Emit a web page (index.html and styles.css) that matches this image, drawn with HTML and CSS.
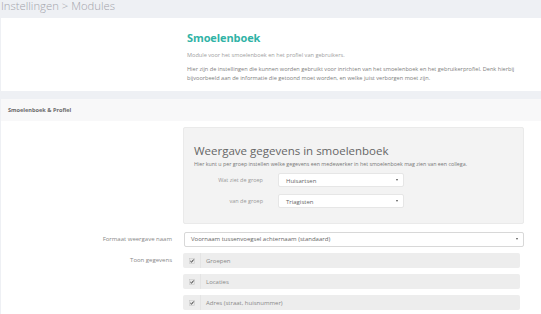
FILE: index.html
```html
<!DOCTYPE html>
<html lang="nl">
<head>
  <meta charset="UTF-8" />
  <title>Instellingen &gt; Modules</title>
  <link rel="stylesheet" href="styles.css">
</head>
<body>

<h1 class="page-title">Instellingen &gt; Modules</h1>

<section class="panel intro">
  <h2>Smoelenboek</h2>
  <p class="lead">Module voor het smoelenboek en het profiel van gebruikers.</p>
  <p>Hier zijn de instellingen die kunnen worden gebruikt voor inrichten van het smoelenboek en het gebruikerprofiel. Denk hierbij bijvoorbeeld aan de informatie die getoond moet worden, en welke juist verborgen moet zijn.</p>
</section>

<section class="panel settings">
  <div class="panel-header">Smoelenboek &amp; Profiel</div>

  <div class="form">
    <div></div>
    <div class="group-box">
      <h3>Weergave gegevens in smoelenboek</h3>
      <p>Hier kunt u per groep instellen welke gegevens een medewerker in het smoelenboek mag zien van een collega.</p>
      <div class="box-row">
        <label>Wat ziet de groep</label>
        <div class="select small">Huisartsen <span class="caret"></span></div>
      </div>
      <div class="box-row">
        <label>van de groep</label>
        <div class="select small">Triagisten <span class="caret"></span></div>
      </div>
    </div>

    <label class="form-label">Formaat weergave naam</label>
    <div class="select wide">Voornaam tussenvoegsel achternaam (standaard) <span class="caret"></span></div>

    <label class="form-label top">Toon gegevens</label>
    <div class="checks">
      <div class="check-row">
        <span class="check-cell"><svg width="6" height="6" viewBox="0 0 6 6"><rect x="0.5" y="0.5" width="5" height="5" fill="#e8e8e8" stroke="#c4c4c4" stroke-width="0.5"/><path d="M1.4 3.1 L2.5 4.2 L4.7 1.5" fill="none" stroke="#333" stroke-width="1"/></svg></span>
        <span class="check-text">Groepen</span>
      </div>
      <div class="check-row">
        <span class="check-cell"><svg width="6" height="6" viewBox="0 0 6 6"><rect x="0.5" y="0.5" width="5" height="5" fill="#e8e8e8" stroke="#c4c4c4" stroke-width="0.5"/><path d="M1.4 3.1 L2.5 4.2 L4.7 1.5" fill="none" stroke="#333" stroke-width="1"/></svg></span>
        <span class="check-text">Locaties</span>
      </div>
      <div class="check-row">
        <span class="check-cell"><svg width="6" height="6" viewBox="0 0 6 6"><rect x="0.5" y="0.5" width="5" height="5" fill="#e8e8e8" stroke="#c4c4c4" stroke-width="0.5"/><path d="M1.4 3.1 L2.5 4.2 L4.7 1.5" fill="none" stroke="#333" stroke-width="1"/></svg></span>
        <span class="check-text">Adres (straat, huisnummer)</span>
      </div>
    </div>
  </div>
</section>

</body>
</html>
```

FILE: styles.css
```css
body {
  margin: 0;
  font-family: 'Open Sans', sans-serif;
  background: #eef0f4;
  overflow: hidden;
}

.page-title {
  margin: 0;
  height: 18px;
  padding-left: 1px;
  font-size: 11.3px;
  font-weight: 300;
  line-height: 12px;
  color: #a3a4ab;
}

.panel {
  background: #fff;
  margin-left: 1px;
}

.intro {
  padding: 13px 16px 8px 186px;
}

.intro h2 {
  margin: 0;
  font-size: 11px;
  line-height: 14px;
  font-weight: 700;
  color: #2fb3a6;
  letter-spacing: -0.1px;
}

.intro p {
  margin: 5px 0 0;
  font-size: 5.6px;
  line-height: 9px;
  color: #808080;
}

.intro .lead {
  margin-top: 6px;
  color: #a0a0a0;
}

.settings {
  margin-top: 8px;
  height: 220px;
}

.panel-header {
  height: 22px;
  line-height: 22px;
  padding-left: 7px;
  background: #f8f8f9;
  font-size: 5.6px;
  font-weight: 700;
  color: #6b6b6b;
}

.form {
  display: grid;
  grid-template-columns: 182px 341px;
  row-gap: 6px;
  padding-top: 6px;
  align-items: center;
}

.form-label {
  text-align: right;
  padding-right: 11px;
  font-size: 6px;
  color: #888;
}

.form-label.top {
  align-self: start;
  line-height: 15px;
}

.group-box {
  background: #f3f3f3;
  border: 1px solid #eaeaea;
  border-radius: 2px;
  padding: 16px 10px 15px;
}

.group-box h3 {
  margin: 0;
  font-size: 11.5px;
  line-height: 14px;
  font-weight: 400;
  color: #666;
}

.group-box p {
  margin: 2px 0 5px;
  font-size: 5.3px;
  line-height: 8px;
  color: #777;
}

.box-row {
  display: grid;
  grid-template-columns: 69px 126px;
  column-gap: 15px;
  align-items: center;
  margin-top: 7px;
}

.box-row:first-of-type {
  margin-top: 0;
}

.box-row label {
  text-align: right;
  font-size: 5.5px;
  color: #999;
}

.select {
  position: relative;
  height: 14px;
  line-height: 14px;
  background: #fff;
  border: 1px solid #e6e6e6;
  border-radius: 2px;
  box-sizing: border-box;
  font-size: 6px;
  color: #666;
}

.select.small {
  padding-left: 7px;
}

.select.wide {
  height: 15px;
  line-height: 13px;
  padding-left: 6px;
  margin: 2px 0 0 1px;
  border-color: #d8d8d8;
}

.caret {
  position: absolute;
  right: 5px;
  top: 5px;
  border-left: 1.5px solid transparent;
  border-right: 1.5px solid transparent;
  border-top: 2.5px solid #555;
}

.checks {
  display: flex;
  flex-direction: column;
  gap: 6px;
  margin-right: 4px;
}

.check-row {
  display: flex;
  height: 15px;
  background: #ededed;
  border-radius: 2px;
  align-items: center;
}

.check-cell {
  width: 18px;
  height: 15px;
  display: flex;
  align-items: center;
  justify-content: center;
  border-right: 1px solid #e4e4e4;
  box-sizing: border-box;
}

.check-text {
  padding-left: 5px;
  font-size: 6px;
  color: #888;
}
```
